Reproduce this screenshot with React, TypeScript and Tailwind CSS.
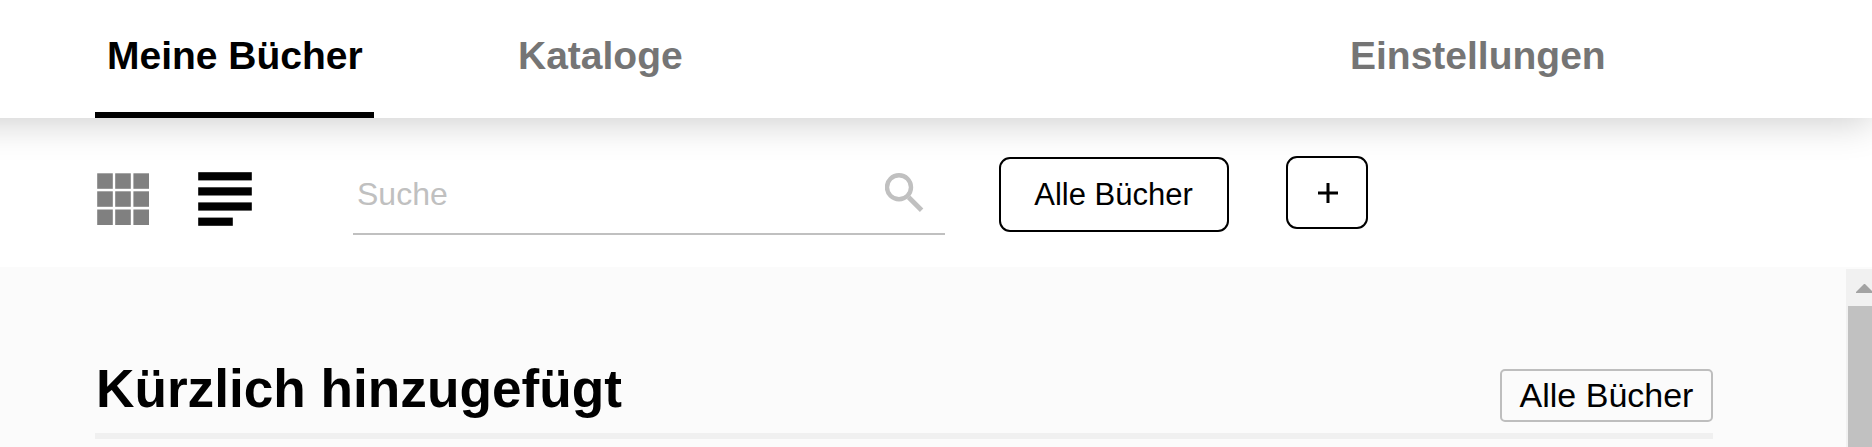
import React from "react";

function Tab({ label, active = false, className = "" }: { label: string; active?: boolean; className?: string }) {
  return (
    <button
      className={`flex h-[118px] shrink-0 items-start whitespace-nowrap border-b-[6px] pt-[33px] text-[39px] leading-[45px] font-bold ${
        active ? "border-black text-black" : "border-transparent text-[#757575]"
      } ${className}`}
    >
      {label}
    </button>
  );
}

function GridIcon() {
  const cells = [0, 18, 36.2];
  return (
    <svg width="53" height="53" viewBox="0 0 53 53" fill="#808080">
      {cells.map((y) =>
        cells.map((x) => <rect key={`${x}-${y}`} x={x + 0.2} y={y + 0.3} width="15.6" height="15.5" />)
      )}
    </svg>
  );
}

function ListIcon() {
  return (
    <svg width="54" height="54" viewBox="0 0 54 54" fill="#000">
      <rect x="0.2" y="0.2" width="53.6" height="8.2" />
      <rect x="0.2" y="15.3" width="53.6" height="8.2" />
      <rect x="0.2" y="30.4" width="53.6" height="8.2" />
      <rect x="0.2" y="45.6" width="34.6" height="8.2" />
    </svg>
  );
}

function SearchIcon() {
  return (
    <svg width="40" height="40" viewBox="0 0 40 40" fill="none" stroke="#c0c0c0">
      <circle cx="14" cy="14.2" r="12" strokeWidth="4.4" />
      <path d="M23.6 24.2 L36.6 37.2" strokeWidth="4.8" />
    </svg>
  );
}

export default function App() {
  return (
    <div className="flex h-[447px] w-[1872px] flex-col overflow-hidden bg-white font-['Liberation_Sans',Arial,sans-serif] text-black">
      <header className="relative z-10 -ml-[60px] flex h-[118px] w-[1932px] shrink-0 bg-white pl-[155px] shadow-[0_4px_36px_rgba(0,0,0,0.2)]">
        <Tab label="Meine Bücher" active className="w-[279px] pl-[12px]" />
        <Tab label="Kataloge" className="ml-[132px] w-[188px] pl-[12px]" />
        <Tab label="Einstellungen" className="ml-[643px] w-[279px] pl-[13px]" />
      </header>

      <section className="flex h-[149px] shrink-0 items-start bg-white pl-[97px]">
        <button className="mt-[55px]"><GridIcon /></button>
        <button className="mt-[54px] ml-[48px]"><ListIcon /></button>
        <label className="mt-[44px] ml-[101px] flex h-[73px] w-[592px] items-start border-b-2 border-[#c0c0c0] pl-[4px]">
          <span className="mt-[14px] w-[528px] text-[32px] leading-[37px] text-[#c0c0c0]">Suche</span>
          <span className="mt-[11px]"><SearchIcon /></span>
        </label>
        <button className="mt-[39px] ml-[54px] h-[75px] w-[230px] rounded-[11px] border-2 border-black pt-px pr-px text-[31px] leading-[36px]">
          Alle Bücher
        </button>
        <button className="mt-[38px] ml-[57px] flex h-[73px] w-[82px] items-center justify-center rounded-[11px] border-2 border-black pl-px">
          <svg width="20" height="20" viewBox="0 0 20 20" stroke="#000" strokeWidth="3">
            <path d="M10 0V20M0 10H20" />
          </svg>
        </button>
      </section>

      <main className="flex h-[180px] shrink-0 bg-[#fbfbfb] pl-[95px]">
        <div className="flex h-[172px] w-[1618px] items-start justify-between border-b-[6px] border-[#f0f0f0]">
          <h1 className="mt-[91px] ml-px text-[53.2px] leading-[61px] font-bold whitespace-nowrap">Kürzlich hinzugefügt</h1>
          <button className="mt-[102px] h-[53px] w-[213px] rounded-[5px] border-2 border-[#bebebe] text-[34px] leading-[39px] whitespace-nowrap">
            Alle Bücher
          </button>
        </div>
        <div className="mt-[2px] ml-[133px] flex w-[26px] flex-col bg-[#f1f1f1]">
          <div className="h-[37px] shrink-0 pt-[15px] pl-[10px]">
            <svg width="16" height="9" viewBox="0 0 16 9" fill="#a3a3a3">
              <path d="M0 9V8L8 0H9L17 8V9Z" />
            </svg>
          </div>
          <div className="ml-[2px] grow bg-[#c1c1c1]" />
        </div>
      </main>
    </div>
  );
}
